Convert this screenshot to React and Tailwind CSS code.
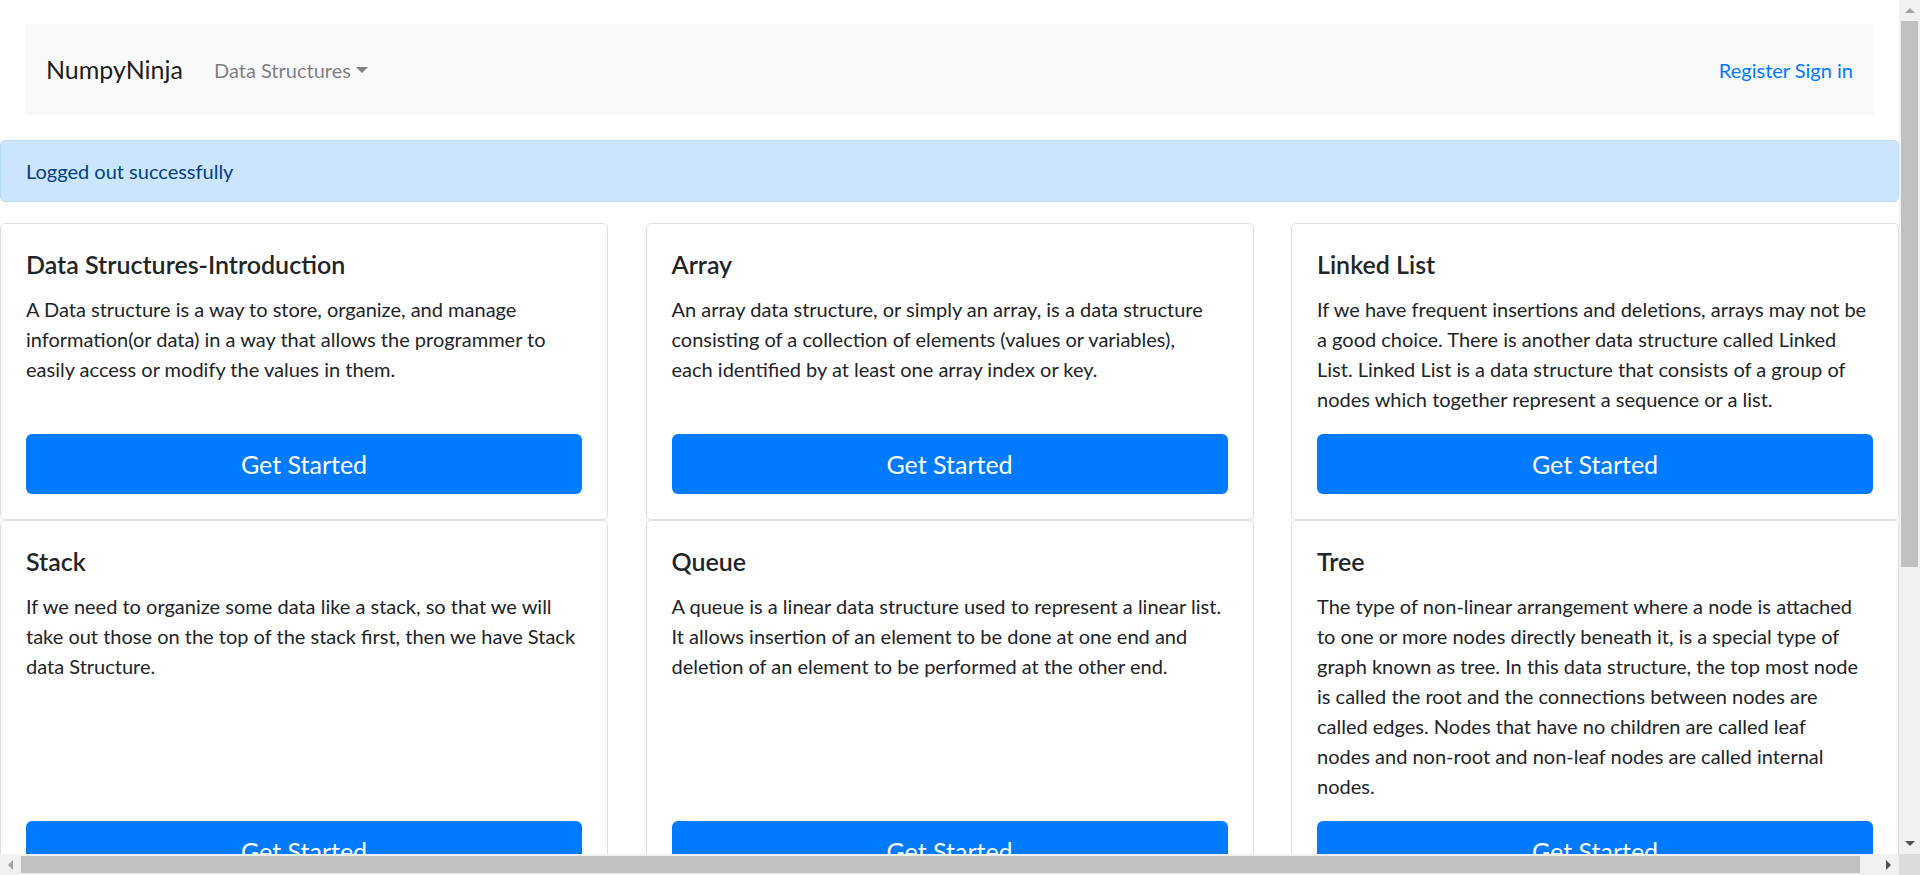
// card copy, broken into the same lines as the original page
const cards = [
  {
    title: "Data Structures-Introduction",
    lines: [
      "A Data structure is a way to store, organize, and manage",
      "information(or data) in a way that allows the programmer to",
      "easily access or modify the values in them.",
    ],
  },
  {
    title: "Array",
    lines: [
      "An array data structure, or simply an array, is a data structure",
      "consisting of a collection of elements (values or variables),",
      "each identified by at least one array index or key.",
    ],
  },
  {
    title: "Linked List",
    lines: [
      "If we have frequent insertions and deletions, arrays may not be",
      "a good choice. There is another data structure called Linked",
      "List. Linked List is a data structure that consists of a group of",
      "nodes which together represent a sequence or a list.",
    ],
  },
  {
    title: "Stack",
    lines: [
      "If we need to organize some data like a stack, so that we will",
      "take out those on the top of the stack first, then we have Stack",
      "data Structure.",
    ],
  },
  {
    title: "Queue",
    lines: [
      "A queue is a linear data structure used to represent a linear list.",
      "It allows insertion of an element to be done at one end and",
      "deletion of an element to be performed at the other end.",
    ],
  },
  {
    title: "Tree",
    lines: [
      "The type of non-linear arrangement where a node is attached",
      "to one or more nodes directly beneath it, is a special type of",
      "graph known as tree. In this data structure, the top most node",
      "is called the root and the connections between nodes are",
      "called edges. Nodes that have no children are called leaf",
      "nodes and non-root and non-leaf nodes are called internal",
      "nodes.",
    ],
  },
];

function Card({ title, lines }) {
  return (
    <div className="w-[608px] shrink-0 border border-[#dfdfdf] rounded-[5px] bg-white p-[25px] flex flex-col">
      <h5 className="text-[25px] leading-[30px] font-semibold text-[#212529] mb-[15px]">{title}</h5>
      <p className="text-[20px] leading-[30px] text-[#212529] mb-[20px]">
        {lines.map((l) => (
          <span key={l} className="block whitespace-nowrap">
            {l}
          </span>
        ))}
      </p>
      <button className="mt-auto w-full h-[60px] shrink-0 bg-[#007bff] rounded-[6px] text-white text-[25px] leading-[37px]">
        Get Started
      </button>
    </div>
  );
}

function Navbar() {
  return (
    <nav className="ml-[25px] w-[1849px] h-[91px] bg-[#f8f9fa] flex items-center px-[21px]">
      <span className="text-[25px] leading-[37px] text-black/90">NumpyNinja</span>
      <span className="ml-[31px] flex items-center text-[20px] leading-[30px] text-black/50">
        Data Structures
        <span className="ml-[5px] w-0 h-0 border-x-[6px] border-x-transparent border-t-[6px] border-t-[#808080]"></span>
      </span>
      <span className="ml-auto text-[20px] leading-[30px] text-[#007bff]">
        <a>Register</a> <a>Sign in</a>
      </span>
    </nav>
  );
}

function VScroll() {
  return (
    <div className="w-[21px] h-[854px] bg-[#f1f1f1] flex flex-col">
      <div className="h-[21px] flex items-center justify-center">
        <span className="w-0 h-0 border-x-[5px] border-x-transparent border-b-[5px] border-b-[#a3a3a3]"></span>
      </div>
      <div className="mx-[2px] h-[546px] bg-[#c1c1c1]"></div>
      <div className="flex-1"></div>
      <div className="h-[21px] flex items-center justify-center">
        <span className="w-0 h-0 border-x-[5px] border-x-transparent border-t-[5px] border-t-[#505050]"></span>
      </div>
    </div>
  );
}

function HScroll() {
  return (
    <div className="flex h-[21px]">
      <div className="w-[1899px] bg-[#f1f1f1] flex">
        <div className="w-[21px] flex items-center justify-center">
          <span className="w-0 h-0 border-y-[5px] border-y-transparent border-r-[5px] border-r-[#a3a3a3]"></span>
        </div>
        <div className="my-[2px] w-[1839px] bg-[#c1c1c1]"></div>
        <div className="flex-1"></div>
        <div className="w-[21px] flex items-center justify-center">
          <span className="w-0 h-0 border-y-[5px] border-y-transparent border-l-[5px] border-l-[#505050]"></span>
        </div>
      </div>
      <div className="w-[21px] bg-[#dcdcdc]"></div>
    </div>
  );
}

export default function App() {
  return (
    <div className="w-[1920px] h-[875px] overflow-hidden bg-white flex flex-col font-['Lato','Roboto',sans-serif]">
      <div className="flex">
        <div className="w-[1899px] h-[854px] overflow-hidden pt-[24px]">
          <Navbar />
          <div className="mt-[25px] border border-[#b8daff] bg-[#cce5ff] text-[#004085] rounded-[5px] px-[25px] py-[15px] text-[20px] leading-[30px]">
            Logged out successfully
          </div>
          <div className="mt-[21px] flex flex-col">
            <div className="flex gap-[37.5px]">
              {cards.slice(0, 3).map((c) => (
                <Card key={c.title} {...c} />
              ))}
            </div>
            <div className="flex gap-[37.5px]">
              {cards.slice(3).map((c) => (
                <Card key={c.title} {...c} />
              ))}
            </div>
          </div>
        </div>
        <VScroll />
      </div>
      <HScroll />
    </div>
  );
}
